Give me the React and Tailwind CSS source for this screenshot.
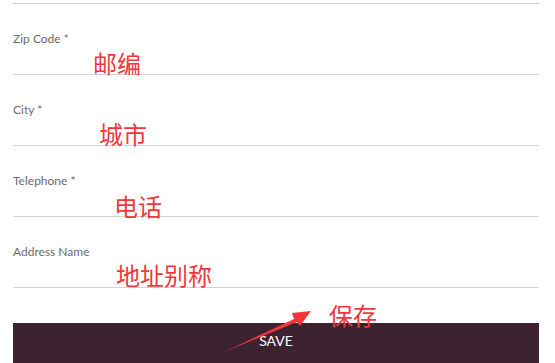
const fields = [
  { label: 'Zip Code *', note: '邮编', noteClass: 'left-[93px] top-[49px]' },
  { label: 'City *', note: '城市', noteClass: 'left-[99px] top-[120px]' },
  { label: 'Telephone *', note: '电话', noteClass: 'left-[114px] top-[192px]' },
  { label: 'Address Name', note: '地址别称', noteClass: 'left-[116px] top-[261px]' },
]

const Field = ({ label }) => (
  <div className="pt-[27px]">
    <label className="block text-[12px] leading-[15px] text-[#6b6b6b]">{label}</label>
    <div className="h-[29px] border-b border-[#d4d4d4]" />
  </div>
)

export default function App() {
  return (
    <div className="relative h-[363px] w-[555px] overflow-hidden bg-white font-['Lato','Open_Sans',sans-serif]">
      <div className="pl-[13px] pr-[16px]">
        <div className="h-[4px] border-b border-[#d4d4d4]" />
        {fields.map((f) => (
          <Field key={f.label} label={f.label} />
        ))}
        <button className="mt-[35px] flex h-[44px] w-full justify-center bg-[#3d2331] pt-[10px] text-[14px] leading-[16px] text-white">
          SAVE
        </button>
      </div>

      {/* red annotations */}
      {fields.map((f) => (
        <span
          key={f.note}
          className={`absolute ${f.noteClass} text-[24px] leading-[28px] text-[#f2373c] font-['Noto_Sans_CJK_SC',sans-serif]`}
        >
          {f.note}
        </span>
      ))}
      <span className="absolute left-[329px] top-[301px] text-[24px] leading-[28px] text-[#f2373c] font-['Noto_Sans_CJK_SC',sans-serif]">
        保存
      </span>
      <svg className="absolute left-0 top-0" width="555" height="363">
        <path d="M224 352 L294 319 L292 313 L311 311 L300 326 L297 322 Z" fill="#f2373c" />
      </svg>
    </div>
  )
}
